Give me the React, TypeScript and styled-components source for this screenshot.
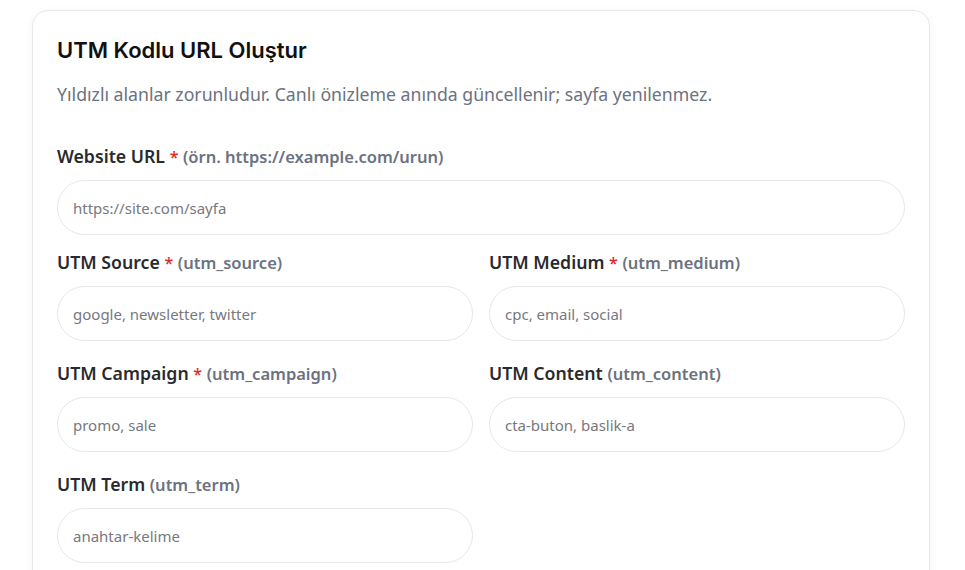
import styled, { createGlobalStyle } from "styled-components";

const GlobalStyle = createGlobalStyle`
  * { box-sizing: border-box; }
  body {
    margin: 0;
    background: #ffffff;
    font-family: "Noto Sans", "Open Sans", sans-serif;
  }
`;

const Page = styled.div`
  padding: 10px 35px 0 32px;
`;

const Card = styled.section`
  background: #ffffff;
  border: 1px solid #e7e8eb;
  border-radius: 16px;
  box-shadow: 0 2px 10px rgba(17, 24, 39, 0.05);
  padding: 24px 24px 30px 24px;
`;

const Title = styled.h2`
  margin: 0;
  font-family: "Inter", sans-serif;
  font-weight: 600;
  font-size: 22px;
  line-height: 30px;
  color: #111111;
`;

const Subtitle = styled.p`
  margin: 16px 0 37px;
  font-size: 17.7px;
  line-height: 26px;
  color: #6b7280;
`;

const Field = styled.div<{ $gap?: number }>`
  display: flex;
  flex-direction: column;
  margin-bottom: ${(p) => p.$gap ?? 0}px;
`;

const Grid = styled.div`
  display: grid;
  grid-template-columns: 1fr 1fr;
  column-gap: 16px;
  row-gap: 20px;
`;

const Label = styled.label`
  font-size: 17.7px;
  font-weight: 600;
  line-height: 24px;
  color: #2a2a2e;
  margin-bottom: 11px;
`;

const Star = styled.span`
  color: #dc2626;
  font-size: 16px;
  font-weight: 500;
`;

const Hint = styled.span`
  color: #6b7280;
  font-size: 16.5px;
`;

const Input = styled.input`
  height: 55px;
  width: 100%;
  border: 1px solid #e5e7eb;
  border-radius: 999px;
  padding: 0 15px;
  font-family: "Noto Sans", "Open Sans", sans-serif;
  font-size: 15px;
  color: #111827;
  background: #ffffff;
  outline: none;
  &::placeholder { color: #787880; }
`;

type F = { name: string; key: string; required?: boolean; placeholder: string };

const fields: F[] = [
  { name: "UTM Source", key: "utm_source", required: true, placeholder: "google, newsletter, twitter" },
  { name: "UTM Medium", key: "utm_medium", required: true, placeholder: "cpc, email, social" },
  { name: "UTM Campaign", key: "utm_campaign", required: true, placeholder: "promo, sale" },
  { name: "UTM Content", key: "utm_content", placeholder: "cta-buton, baslik-a" },
  { name: "UTM Term", key: "utm_term", placeholder: "anahtar-kelime" },
];

export default function App() {
  return (
    <>
      <GlobalStyle />
      <Page>
        <Card>
          <Title>UTM Kodlu URL Oluştur</Title>
          <Subtitle>Yıldızlı alanlar zorunludur. Canlı önizleme anında güncellenir; sayfa yenilenmez.</Subtitle>
          <Field $gap={15}>
            <Label>
              Website URL <Star>*</Star> <Hint>(örn. https://example.com/urun)</Hint>
            </Label>
            <Input placeholder="https://site.com/sayfa" />
          </Field>
          <Grid>
            {fields.map((f) => (
              <Field key={f.key}>
                <Label>
                  {f.name} {f.required && <><Star>*</Star> </>}<Hint>({f.key})</Hint>
                </Label>
                <Input placeholder={f.placeholder} />
              </Field>
            ))}
          </Grid>
        </Card>
      </Page>
    </>
  );
}
